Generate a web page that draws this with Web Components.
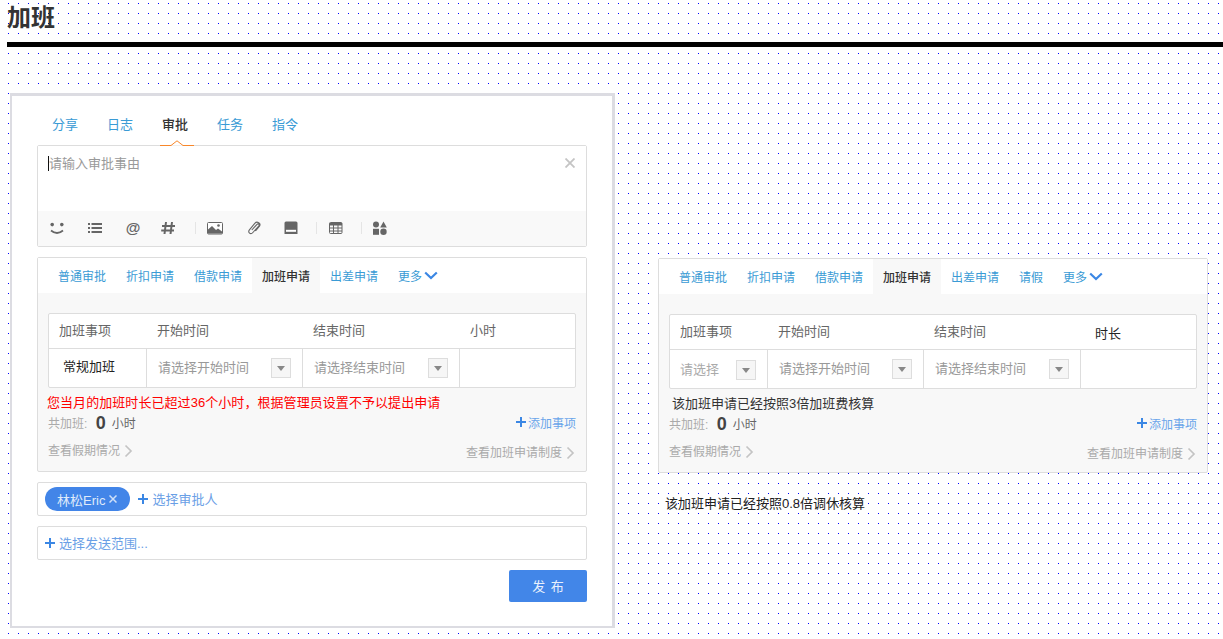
<!DOCTYPE html>
<html lang="zh">
<head>
<meta charset="utf-8">
<title>加班</title>
<style>
  html, body { margin: 0; height: 639px; overflow: hidden; }
  body {
    font-family: "Liberation Sans", "Noto Sans CJK SC", sans-serif;
    font-size: 13px;
    color: #333;
    background-color: #fff;
    background-image: conic-gradient(at 1px 1px, transparent 75%, #00f 0);
    background-size: 10px 10px;
    background-position: 8px 3px;
  }
  .columns { display: flex; align-items: flex-start; padding: 46px 0 0 10px; }
  .side { margin: 155px 0 0 43px; width: 550px; }
  .note { margin: 22px 0 0 7px; line-height: 18px; color: #222; }
</style>
</head>
<body>
<page-title>加班</page-title>
<div class="columns">
  <feed-card>
    <feed-tabs></feed-tabs>
    <feed-composer></feed-composer>
    <apply-panel extra="" last="小时">
      <span slot="kind" class="plain">常规加班</span>
      <span slot="message" style="color:#f00;display:block;margin-left:-1px;letter-spacing:.06px">您当月的加班时长已超过36个小时，根据管理员设置不予以提出申请</span>
    </apply-panel>
    <pick-box style="margin-top:10px">
      <user-chip>林松Eric</user-chip>
      <span slot="label">选择审批人</span>
    </pick-box>
    <pick-box style="margin-top:10px">
      <span slot="label">选择发送范围...</span>
    </pick-box>
    <publish-bar>发 布</publish-bar>
  </feed-card>
  <div class="side">
    <apply-panel extra="请假" last="时长" dark-last>
      <time-select slot="kind" short placeholder="请选择"></time-select>
      <span slot="message" style="color:#333;display:block;margin-left:3px">该加班申请已经按照3倍加班费核算</span>
    </apply-panel>
    <div class="note">该加班申请已经按照0.8倍调休核算</div>
  </div>
</div>

<script>
const BLUE = '#3b87e4'

const chevronDown = `<svg width="14" height="14" viewBox="0 0 14 14" fill="none"><path d="M1.2 3.500 L7 9 L12.800 3.500" stroke="${BLUE}" stroke-width="2.200"/></svg>`
const chevronRight = `<svg width="14" height="14" viewBox="0 0 14 14" fill="none"><path d="M5.500 1.500 L11 7 L5.500 12.500" stroke="#c4c4c4" stroke-width="1.700"/></svg>`

const plus = size => `<svg width="${size}" height="${size}" viewBox="0 0 10 10"><path d="M0 5 H10 M5 0 V10" stroke="${BLUE}" stroke-width="2"/></svg>`

class PageTitle extends HTMLElement {
  constructor() {
    super()
    this.attachShadow({ mode: 'open' }).innerHTML = `
      <style>
        :host { display: block; padding-left: 7px; }
        h1 { margin: 0; height: 42px; font-size: 24px; line-height: 36px; font-weight: 700; color: #333; }
        div { height: 5px; background: #000; }
      </style>
      <h1><slot></slot></h1>
      <div></div>
    `
  }
}

class FeedCard extends HTMLElement {
  constructor() {
    super()
    this.attachShadow({ mode: 'open' }).innerHTML = `
      <style>
        :host {
          display: block;
          box-sizing: border-box;
          width: 605px;
          height: 535px;
          padding: 0 25px;
          background: #fff;
          border: solid #dcdce2;
          border-width: 3px 3px 2px 2px;
        }
      </style>
      <slot></slot>
    `
  }
}

class FeedTabs extends HTMLElement {
  constructor() {
    super()
    const items = ['分享', '日志', '审批', '任务', '指令']
    this.attachShadow({ mode: 'open' }).innerHTML = `
      <style>
        :host { display: flex; height: 49px; padding-left: 15px; position: relative; z-index: 1; }
        span { width: 55px; line-height: 58px; font-size: 13px; color: #3a9bd5; }
        .on { color: #333; font-weight: 500; }
        svg { position: absolute; left: 123px; bottom: -1px; }
      </style>
      ${items.map(t => `<span class="${t === '审批' ? 'on' : ''}">${t}</span>`).join('')}
      <svg width="34" height="6" viewBox="0 0 34 6" fill="#fff"><path d="M0 5.500 H11 L17 .8 L23 5.500 H34" stroke="#f8872a"/></svg>
    `
  }
}

class FeedComposer extends HTMLElement {
  constructor() {
    super()
    const g = '#666'
    const tools = [
      [0, `<svg width="16" height="16" viewBox="0 0 16 16"><circle cx="3.200" cy="4.600" r="1.800" fill="${g}"/><circle cx="12.800" cy="4.600" r="1.800" fill="${g}"/><path d="M2 10.500 Q8 15.500 14 10.500" fill="none" stroke="${g}" stroke-width="1.700"/></svg>`],
      [22, `<svg width="16" height="16" viewBox="0 0 16 16" fill="${g}"><rect x="1" y="3" width="2" height="2"/><rect x="1" y="7" width="2" height="2"/><rect x="1" y="11" width="2" height="2"/><rect x="4.500" y="3" width="10.500" height="2"/><rect x="4.500" y="7" width="10.500" height="2"/><rect x="4.500" y="11" width="10.500" height="2"/></svg>`],
      [22, `<span class="glyph">@</span>`],
      [19, `<svg width="16" height="16" viewBox="0 0 16 16" fill="none"><path d="M6 2 L4.500 14 M12 2 L10.500 14 M2 6 H15 M1.200 10.500 H14" stroke="${g}" stroke-width="2"/></svg>`],
      [19, `<i></i>`],
      [11, `<svg width="16" height="16" viewBox="0 0 16 16"><rect x=".5" y="2.500" width="15" height="11.500" rx="1" fill="#fff" stroke="${g}"/><path d="M1 13.500 V9.500 L5 6 L9 10 L11 8.500 L15 11.500 V13.500 Z" fill="${g}"/><circle cx="11.500" cy="5.500" r="1.300" fill="${g}"/></svg>`],
      [23, `<svg width="16" height="16" viewBox="0 0 16 16" fill="none"><path d="M5.800 10 L11 4.300 C12.300 3 13.800 4.700 12.700 6 L6.900 12.500 C4.600 15 1.300 12.400 3.400 9.800 L9 3.200 C11 .8 15.300 3.200 13.500 6.200 L9.500 11" stroke="${g}" stroke-width="1.100"/></svg>`],
      [21, `<svg width="16" height="16" viewBox="0 0 16 16"><path d="M3 1.500 H13 Q14.500 1.500 14.500 3 V14 H1.500 V3 Q1.500 1.500 3 1.500 Z" fill="${g}"/><rect x="3" y="9.800" width="10" height="2" fill="#fff"/></svg>`],
      [17, `<i></i>`],
      [11, `<svg width="16" height="16" viewBox="0 0 16 16" fill="none"><rect x="1.500" y="2.500" width="12.500" height="11" rx="1" stroke="${g}"/><path d="M1.500 3 H14 V5.500 H1.500 Z" fill="${g}"/><path d="M1.500 8 H14 M1.500 11 H14 M5.500 5 V13.500 M10 5 V13.500" stroke="${g}"/></svg>`],
      [17, `<i></i>`],
      [10, `<svg width="16" height="16" viewBox="0 0 16 16" fill="${g}"><circle cx="4" cy="4.500" r="3"/><path d="M11.500 1.500 L14.800 7.500 H8.200 Z"/><rect x="1" y="8.800" width="6" height="6"/><circle cx="11.500" cy="11.800" r="3.200"/></svg>`]
    ]
    this.attachShadow({ mode: 'open' }).innerHTML = `
      <style>
        :host { display: block; box-sizing: border-box; height: 102px; border: 1px solid #ddd; border-radius: 2px; position: relative; }
        .input { height: 65px; box-sizing: border-box; padding: 9px 10px; font-size: 13px; line-height: 18px; color: #999; background: #fff; }
        .input span { border-left: 1px solid #111; }
        .close { position: absolute; right: 11px; top: 12px; }
        .bar { display: flex; align-items: center; box-sizing: border-box; height: 35px; padding: 0 0 1px 11px; background: #f9f9f9; }
        .bar svg, .glyph { display: block; width: 16px; height: 16px; }
        .glyph { font: 700 15px/16px "Liberation Sans", sans-serif; color: #666; text-align: center; }
        i { display: block; width: 1px; height: 12px; background: #e5e5e5; }
      </style>
      <div class="input"><span>请输入审批事由</span></div>
      <svg class="close" width="10" height="10" viewBox="0 0 10 10"><path d="M.5 .5 L9.500 9.500 M9.500 .5 L.5 9.500" stroke="#c4c4c4" stroke-width="1.800"/></svg>
      <div class="bar">
        ${tools.map(([gap, html]) => `<div style="margin-left:${gap}px">${html}</div>`).join('')}
      </div>
    `
  }
}

class TimeSelect extends HTMLElement {
  constructor() {
    super()
    this.attachShadow({ mode: 'open' }).innerHTML = `
      <style>
        :host { display: flex; align-items: center; justify-content: space-between; height: 38px; padding: 0 11px; color: #999; font-size: 13px; }
        span { position: relative; top: -2px; }
        :host([short]) { padding-left: 10px; color: #aaa; }
        :host([short]) span { top: -1px; }
        :host([short]) b { position: relative; top: 1px; }
        b { display: flex; align-items: center; justify-content: center; box-sizing: border-box; width: 20px; height: 20px; border: 1px solid #ddd; background: #f6f6f6; }
        b::after { content: ""; border: 4px solid transparent; border-top: 5px solid #888; border-bottom: 0; }
      </style>
      <span>${this.getAttribute('placeholder')}</span><b></b>
    `
  }
}

class ApplyPanel extends HTMLElement {
  constructor() {
    super()
    const extra = this.getAttribute('extra')
    const tabs = ['普通审批', '折扣申请', '借款申请', '加班申请', '出差申请']
    if (extra) tabs.push(extra)
    this.attachShadow({ mode: 'open' }).innerHTML = `
      <style>
        :host { display: block; box-sizing: border-box; height: 215px; margin-top: 10px; border: 1px solid #ddd; border-radius: 2px; background: #f8f8f8; font-size: 13px; }
        .tabs { display: flex; height: 35px; padding-left: 10px; background: #fff; font-size: 12px; line-height: 38px; color: #3a9bd5; }
        .tabs span { padding: 0 10px; }
        .tabs .on { background: #f8f8f8; color: #333; font-weight: 500; }
        .tabs svg { margin: 11px 0 0 2px; }
        .tabs .more { padding-right: 0; }
        .body { padding: 20px 10px 0; }
        .table { display: grid; grid-template-columns: 98px 156px 157px 1fr; border: 1px solid #ddd; border-radius: 2px; background: #fff; color: #666; }
        .th { height: 34px; line-height: 34px; padding-left: 10px; border-bottom: 1px solid #ddd; }
        .last { padding-left: 10px; }
        :host([dark-last]) .last { padding-left: 14px; color: #222; line-height: 38px; }
        .td { height: 38px; border-right: 1px solid #ddd; }
        .td:last-child { border-right: 0; }
        .td ::slotted(.plain) { display: block; padding-left: 14px; line-height: 36px; color: #222; }
        .msg { margin-top: 6px; line-height: 18px; }
        .sum { display: flex; justify-content: space-between; align-items: center; height: 24px; margin-top: -1px; color: #aaa; font-size: 12px; }
        .sum b { font-size: 18px; color: #444; margin: 0 6px 0 5px; line-height: 24px; vertical-align: -1px; }
        .sum em { font-style: normal; color: #666; }
        .add { display: flex; align-items: center; gap: 2px; color: #6aa5ea; padding-bottom: 2px; }
        .links { display: flex; justify-content: space-between; margin-top: 7px; color: #aaa; font-size: 12px; }
        .links span { display: flex; align-items: center; line-height: 18px; }
        .links span + span { position: relative; top: 2px; }
      </style>
      <div class="tabs">
        ${tabs.map(t => `<span class="${t === '加班申请' ? 'on' : ''}">${t}</span>`).join('')}
        <span class="more">更多</span>${chevronDown}
      </div>
      <div class="body">
        <div class="table">
          <div class="th">加班事项</div>
          <div class="th">开始时间</div>
          <div class="th">结束时间</div>
          <div class="th last">${this.getAttribute('last')}</div>
          <div class="td"><slot name="kind"></slot></div>
          <div class="td"><time-select placeholder="请选择开始时间"></time-select></div>
          <div class="td"><time-select placeholder="请选择结束时间"></time-select></div>
          <div class="td"></div>
        </div>
        <div class="msg"><slot name="message"></slot></div>
        <div class="sum">
          <div>共加班: <b>0</b><em>小时</em></div>
          <div class="add">${plus(10)}<span>添加事项</span></div>
        </div>
        <div class="links">
          <span>查看假期情况${chevronRight}</span>
          <span>查看加班申请制度${chevronRight}</span>
        </div>
      </div>
    `
  }
}

class UserChip extends HTMLElement {
  constructor() {
    super()
    this.attachShadow({ mode: 'open' }).innerHTML = `
      <style>
        :host { display: inline-flex; align-items: center; gap: 4px; box-sizing: border-box; height: 24px; padding: 0 13px 0 12px; border-radius: 12px; background: #4285e8; color: #dfeafa; font-size: 13px; }
      </style>
      <slot></slot>
      <svg width="8" height="8" viewBox="0 0 8 8"><path d="M.5 .5 L7.500 7.500 M7.500 .5 L.5 7.500" stroke="#cfe0f8" stroke-width="1.500"/></svg>
    `
  }
}

class PickBox extends HTMLElement {
  constructor() {
    super()
    this.attachShadow({ mode: 'open' }).innerHTML = `
      <style>
        :host { display: flex; align-items: center; box-sizing: border-box; height: 34px; padding-left: 7px; border: 1px solid #ddd; border-radius: 2px; background: #fff; font-size: 13px; }
        .add { display: flex; align-items: center; gap: 4px; color: #6aa0e6; }
        ::slotted(user-chip) { margin-right: 8px; }
        ::slotted(span) { position: relative; top: -1px; }
      </style>
      <slot></slot>
      <div class="add">${plus(10)}<slot name="label"></slot></div>
    `
  }
}

class PublishBar extends HTMLElement {
  constructor() {
    super()
    this.attachShadow({ mode: 'open' }).innerHTML = `
      <style>
        :host { display: flex; justify-content: flex-end; margin-top: 10px; }
        button { width: 78px; height: 32px; padding: 0 0 2px; border: 0; border-radius: 2px; background: #4286e8; color: #e8f0fc; word-spacing: 2px; font: 13px "Liberation Sans", "Noto Sans CJK SC", sans-serif; }
      </style>
      <button type="button"><slot></slot></button>
    `
  }
}

customElements.define('page-title', PageTitle)
customElements.define('feed-card', FeedCard)
customElements.define('feed-tabs', FeedTabs)
customElements.define('feed-composer', FeedComposer)
customElements.define('time-select', TimeSelect)
customElements.define('apply-panel', ApplyPanel)
customElements.define('user-chip', UserChip)
customElements.define('pick-box', PickBox)
customElements.define('publish-bar', PublishBar)
</script>
</body>
</html>
